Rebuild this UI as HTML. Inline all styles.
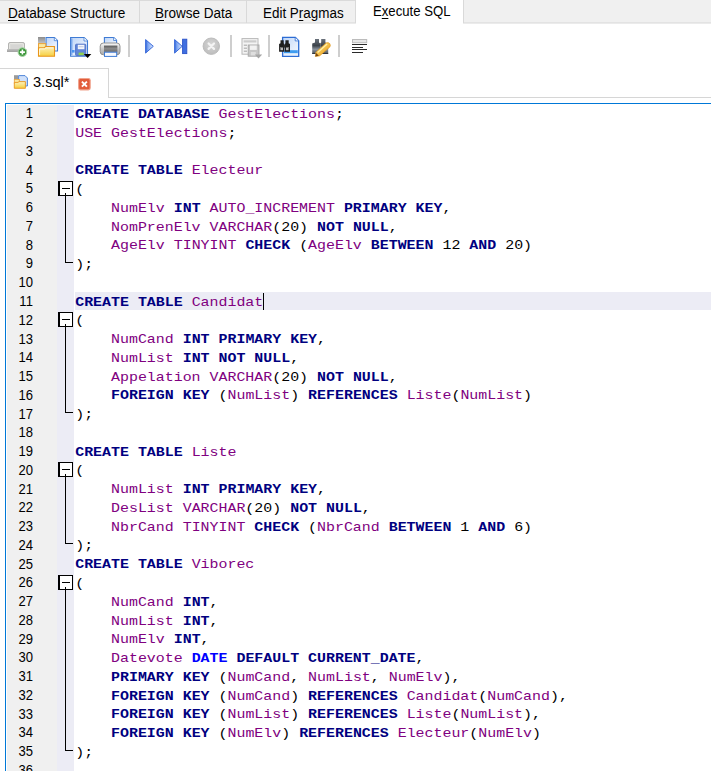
<!DOCTYPE html>
<html><head><meta charset="utf-8"><title>DB Browser for SQLite - Execute SQL</title>
<style>
html,body{margin:0;padding:0;}
body{width:711px;height:771px;overflow:hidden;background:#fff;position:relative;font-family:"Liberation Sans",sans-serif;color:#000;}
.abs{position:absolute;}
/* top tab bar */
#tabbar{position:absolute;left:0;top:0;width:711px;height:22px;background:#f0f0f0;border-bottom:1px solid #e3e3e3;box-shadow:0 1px 0 #ebebeb;}
#tabtop{position:absolute;left:0;top:0;width:356px;height:1px;background:#dadada;}
.tsep{position:absolute;top:0;width:1px;height:23px;background:#d9d9d9;}
#tabsel{position:absolute;left:356px;top:0;width:107px;height:25px;background:#fff;}
.tl{position:absolute;white-space:nowrap;font-size:15.2px;line-height:18px;transform-origin:0 0;}
.ftab span{position:absolute;white-space:nowrap;font-size:15.2px;line-height:18px;transform-origin:0 0;}
u{text-decoration:underline;text-underline-offset:2px;text-decoration-thickness:1px;}
/* file tab */
#pane{position:absolute;left:108px;top:97px;width:603px;height:1px;background:#d6d6d6;}
.ftab{position:absolute;left:0;top:68px;width:108px;height:29px;background:#fff;border-top:1px solid #d6d6d6;border-right:1px solid #d6d6d6;box-sizing:content-box;}
/* editor */
#edT{position:absolute;left:5px;top:103px;width:706px;height:1px;background:#0078d7;}
#edL{position:absolute;left:5px;top:103px;width:1px;height:668px;background:#0078d7;}
#lnm{position:absolute;left:7px;top:105px;width:50px;height:666px;background:#f0f0f0;}
#fm{position:absolute;left:57px;top:105px;width:17px;height:666px;background:#ececf5;}
#cur{position:absolute;left:75px;top:292.00px;width:637px;height:18px;background:#ececf5;}
#caret{position:absolute;left:263px;top:292.50px;width:1px;height:17px;background:#000;}
.ln{position:absolute;left:0;width:32.9px;text-align:right;font-size:13.8px;line-height:25px;height:25px;color:#000;transform:scaleX(0.945);transform-origin:100% 0;}
.cl{position:absolute;left:75.2px;white-space:pre;font-family:"Liberation Mono",monospace;font-size:14.931px;line-height:25px;height:25px;transform:scaleY(0.8);transform-origin:0 16.5px;color:#000;}
.k{color:#000080;font-weight:bold;}
.f{color:#0000ff;font-weight:bold;}
.i{color:#800080;}
.o{color:#000;}
.fb{position:absolute;left:58px;width:15px;height:15px;box-sizing:border-box;border:1px solid #000;border-left-width:2px;background:#fff;}
.fb i{position:absolute;left:2px;top:6px;width:8px;height:1px;background:#000;}
.fv{position:absolute;left:65px;width:1px;background:#000;}
.fh{position:absolute;left:65px;width:8px;height:1px;background:#000;}
.sep{position:absolute;top:35px;width:1.7px;height:22px;background:#cecece;}
svg{position:absolute;overflow:visible;}
</style></head><body>
<div id="tabbar"></div><div id="tabtop"></div><div id="tabsel"></div>
<div class="tsep" style="left:139px"></div><div class="tsep" style="left:246px"></div><div class="tsep" style="left:355px"></div><div class="tsep" style="left:463px"></div>
<span class="tl" style="left:8px;top:4px;transform:scaleX(0.897)"><u>D</u>atabase Structure</span>
<span class="tl" style="left:154.6px;top:4px;transform:scaleX(0.89)"><u>B</u>rowse Data</span>
<span class="tl" style="left:262.8px;top:4px;transform:scaleX(0.884)">Edit P<u>r</u>agmas</span>
<span class="tl" style="left:373px;top:2px;transform:scaleX(0.866)">E<u>x</u>ecute SQL</span>

<svg style="left:0;top:28px" width="400" height="40" viewBox="0 28 400 40">
<defs>
<linearGradient id="gDoc" x1="0" y1="0" x2="1" y2="1"><stop offset="0" stop-color="#bdd5f8"/><stop offset="0.6" stop-color="#e3edfc"/><stop offset="1" stop-color="#f6f9fe"/></linearGradient>
<linearGradient id="gFold" x1="0" y1="0" x2="0" y2="1"><stop offset="0" stop-color="#fdf3c0"/><stop offset="1" stop-color="#f6cf3f"/></linearGradient>
<linearGradient id="gGray" x1="0" y1="0" x2="0" y2="1"><stop offset="0" stop-color="#8c8c8c"/><stop offset="1" stop-color="#c4c4c4"/></linearGradient>
<linearGradient id="gPr" x1="0" y1="0" x2="0" y2="1"><stop offset="0" stop-color="#5a5a5a"/><stop offset="0.5" stop-color="#8c8c8c"/><stop offset="1" stop-color="#6a6a6a"/></linearGradient>
<linearGradient id="gPlay" x1="0" y1="0" x2="1" y2="0"><stop offset="0" stop-color="#2f62d6"/><stop offset="0.3" stop-color="#7aa4f2"/><stop offset="1" stop-color="#e2ecff"/></linearGradient>
<linearGradient id="gBin" x1="0" y1="0" x2="0" y2="1"><stop offset="0" stop-color="#6a727c"/><stop offset="0.45" stop-color="#3c424a"/><stop offset="0.7" stop-color="#8a929c"/><stop offset="1" stop-color="#4a5058"/></linearGradient>
<linearGradient id="gPen" x1="0" y1="0" x2="1" y2="1"><stop offset="0" stop-color="#fde27a"/><stop offset="1" stop-color="#e89a18"/></linearGradient>
<radialGradient id="gStop" cx="0.5" cy="0.4" r="0.6"><stop offset="0" stop-color="#d6d6d6"/><stop offset="1" stop-color="#bdbdbd"/></radialGradient>
<linearGradient id="gPrB" x1="0" y1="0" x2="0" y2="1"><stop offset="0" stop-color="#fafafa"/><stop offset="0.5" stop-color="#c8c8c8"/><stop offset="1" stop-color="#a8a8a8"/></linearGradient>
</defs>
<!-- 1: new tab -->
<path d="M8.5 49.5V44Q8.5 42.5 10 42.5H23Q24.5 42.5 24.5 44V49.5Z" fill="#d6d6d4" stroke="#b4b4b2" stroke-width="1"/>
<path d="M9.7 49V44.3Q9.7 43.7 10.4 43.7H22.6Q23.3 43.7 23.3 44.3V49" fill="none" stroke="#ecece8" stroke-width="0.9"/>
<rect x="7" y="49.4" width="19.5" height="2.6" fill="#a6a6a6"/>
<rect x="7" y="49.4" width="19.5" height="0.9" fill="#c4c4c4"/>
<circle cx="22.4" cy="52.1" r="4.3" fill="#3f983d" stroke="#a6d4a4" stroke-width="1"/>
<path d="M22.4 49.6V54.6M19.9 52.1H24.9" stroke="#fff" stroke-width="1.6"/>
<!-- 2: open -->
<rect x="38" y="37" width="7" height="6.5" fill="url(#gGray)"/>
<path d="M46 37.5H54.5L57.5 40.5V51H46Z" fill="url(#gDoc)" stroke="#3f7bd4" stroke-width="1.1"/>
<path d="M54.3 37.6V40.7H57.4" fill="#fff" stroke="#3f7bd4" stroke-width="0.8"/>
<rect x="38.5" y="43.6" width="7.3" height="5" fill="#fbe9a0" stroke="#e9a23a" stroke-width="1"/>
<path d="M38.5 56.2V47.8H44.2L45.6 46.6H54.5V56.2Z" fill="url(#gFold)" stroke="#e8951c" stroke-width="1.1"/>
<path d="M39.6 55V48.9H44.6L46 47.8H53.4" fill="none" stroke="#fffbe6" stroke-width="0.9"/>
<!-- 3: save -->
<path d="M70.6 37.5H84.2L87.5 40.8V56.2H70.6Z" fill="url(#gDoc)" stroke="#3f7bd4" stroke-width="1.1"/>
<path d="M71.8 38.6V55" stroke="#6ea0ea" stroke-width="1.2"/>
<path d="M84 37.6V41H87.4" fill="#fff" stroke="#3f7bd4" stroke-width="0.8"/>
<rect x="72" y="50" width="2.6" height="2.6" fill="#4a94f0"/>
<rect x="75.6" y="44.2" width="10.2" height="11.4" rx="0.8" fill="#6186d8" stroke="#4a6cc4" stroke-width="0.9"/>
<rect x="77.8" y="44.8" width="6.6" height="4.4" fill="#f4f6fb"/>
<rect x="78.6" y="46.4" width="5" height="0.8" fill="#b0bcd8"/>
<rect x="78.6" y="52.6" width="5.2" height="2.6" fill="#8fd14f"/>
<path d="M83.9 54H91.3L87.6 57.9Z" fill="#000"/>
<!-- 4: print -->
<path d="M104.4 37.5H113.8L116.6 40.3V47H104.4Z" fill="url(#gDoc)" stroke="#3f7bd4" stroke-width="1.1"/>
<path d="M113.6 37.6V40.5H116.5" fill="#fff" stroke="#3f7bd4" stroke-width="0.8"/>
<rect x="100.2" y="43" width="19.8" height="11.8" rx="3.2" fill="url(#gPrB)" stroke="#8a8a8a" stroke-width="0.9"/>
<rect x="104" y="45.6" width="13.4" height="6.2" fill="url(#gPr)"/>
<rect x="104.5" y="52.2" width="12.2" height="4.2" fill="#f6f9ff" stroke="#3f7bd4" stroke-width="1"/>
<!-- 5: play -->
<path d="M145.6 39.6L153.3 46.3L145.6 53.1Z" fill="url(#gPlay)" stroke="#3a6ada" stroke-width="1" stroke-linejoin="round"/>
<!-- 6: step -->
<path d="M174.6 39.6L182.2 46.3L174.6 53.1Z" fill="url(#gPlay)" stroke="#3a6ada" stroke-width="1" stroke-linejoin="round"/>
<rect x="182.6" y="39.2" width="4.2" height="14.4" fill="#3f6fe0" stroke="#2a52c8" stroke-width="0.9"/>
<!-- 7: stop (disabled) -->
<circle cx="211.3" cy="46.2" r="8.2" fill="url(#gStop)" stroke="#bcbcbc" stroke-width="1"/>
<path d="M208.6 43.5L214 48.9M214 43.5L208.6 48.9" stroke="#f4f4f4" stroke-width="2.2" stroke-linecap="round"/>
<!-- 8: save results (disabled) -->
<rect x="242" y="38.6" width="16" height="15.6" fill="#f4f4f4" stroke="#b8b8b8" stroke-width="1"/>
<rect x="243.6" y="40.3" width="12.8" height="2.2" fill="#cccccc"/>
<path d="M243.8 45.2H247M243.8 48.2H247M243.8 51.2H247" stroke="#bdbdbd" stroke-width="1.5"/>
<rect x="248.2" y="45" width="10.8" height="11.2" fill="#c6c6c6" stroke="#a8a8a8" stroke-width="0.9"/>
<rect x="250" y="45.5" width="6.8" height="4.4" fill="#f2f2f2"/>
<rect x="250.8" y="52" width="5" height="3.4" fill="#dedede"/>
<path d="M254.8 54.4H262.2L258.5 58.4Z" fill="#a6a6a6"/>
<!-- 9: find -->
<path d="M282.6 37.4H295.4L298.7 40.7V56.4H282.6Z" fill="url(#gDoc)" stroke="#2c6cd4" stroke-width="1.3"/>
<path d="M295.2 37.5V40.9H298.6" fill="#fff" stroke="#2c6cd4" stroke-width="0.8"/>
<rect x="284" y="50.2" width="13.8" height="3.2" fill="#3e9cf0"/>
<rect x="284" y="53.4" width="13.8" height="1.8" fill="#e6f0fd"/>
<path d="M280.5 40.3H283.7V43.2L284.2 44V51.7H279.1V44L280.5 43.2Z" fill="#1e1e1e"/>
<path d="M285.4 40.3H288.7V43.2L290 44V51.7H284.7V44L285.4 43.2Z" fill="#1e1e1e"/>
<rect x="283.4" y="44.6" width="2" height="3" fill="#2a2a2a"/>
<rect x="280.4" y="47" width="2.6" height="3.2" fill="#b8b8b8"/>
<rect x="286" y="47" width="2.6" height="3.2" fill="#b8b8b8"/>
<rect x="280.4" y="47" width="2.6" height="1" fill="#6e6e6e"/>
<rect x="286" y="47" width="2.6" height="1" fill="#6e6e6e"/>
<!-- 10: find & replace -->
<path d="M315 39H319V42.4L320 43.2V53.8H312.2V43.4L315 42.4Z" fill="url(#gBin)"/>
<path d="M321.2 39H325.4V42.4L328.2 43.4V53.8H320.2V43.2L321.2 42.4Z" fill="url(#gBin)"/>
<rect x="312.2" y="53" width="16" height="0.9" fill="#2a2e34"/>
<path d="M315.3 56.4L316 52.2L326 42.9Q328.4 41.9 329.9 43.8Q330.9 45.6 329.8 47.1L319.6 55.9Z" fill="url(#gPen)" stroke="#e0951c" stroke-width="0.6"/>
<path d="M315.3 56.4L316.1 52.9L318.9 55.7Z" fill="#7a4a14"/>
<path d="M317.6 52.6L327.2 43.9" stroke="#fff0a8" stroke-width="1.3" fill="none"/>
<!-- 11: indent -->
<rect x="352.5" y="39.5" width="14.2" height="3.2" fill="#e6e6e6" stroke="#bcbcbc" stroke-width="1"/>
<path d="M352 44.5H367M352 47.5H363M352 49.5H367M352 52.5H363" stroke="#2a2a2a" stroke-width="1"/>
</svg>
<div class="sep" style="left:128px"></div>
<div class="sep" style="left:230px"></div>
<div class="sep" style="left:268px"></div>
<div class="sep" style="left:338px"></div>


<div id="pane"></div>
<div class="ftab"><span style="left:33px;top:4px;transform:scaleX(0.96)">3.sql*</span></div>
<svg style="left:0;top:68px" width="110" height="30" viewBox="0 68 110 30">
<rect x="14" y="75.2" width="4" height="4" fill="#9a9a9a"/>
<path d="M18.6 75.6H25L27.4 78V86H18.6Z" fill="#cfe0fa" stroke="#3f7bd4" stroke-width="0.9"/>
<rect x="14.3" y="79.4" width="5" height="4" fill="#fbe9a0" stroke="#e9a23a" stroke-width="0.8"/>
<path d="M14.3 88.3V82.4H18L19 81.6H25.4V88.3Z" fill="url(#gFold)" stroke="#e8951c" stroke-width="0.9"/>
<rect x="78.6" y="78.5" width="11.6" height="11.4" rx="1.8" fill="#e25c3a" stroke="#f0a48e" stroke-width="1.1"/>
<path d="M81.9 81.7L86.9 86.7M86.9 81.7L81.9 86.7" stroke="#fff" stroke-width="1.9"/>
</svg>


<div id="lnm"></div><div id="fm"></div>
<div id="cur"></div>
<div id="edT"></div><div id="edL"></div>
<div class="fb" style="top:181px"><i></i></div>
<div class="fv" style="top:193px;height:70px"></div>
<div class="fh" style="top:262px"></div>
<div class="fb" style="top:312px"><i></i></div>
<div class="fv" style="top:324px;height:89px"></div>
<div class="fh" style="top:412px"></div>
<div class="fb" style="top:462px"><i></i></div>
<div class="fv" style="top:474px;height:70px"></div>
<div class="fh" style="top:543px"></div>
<div class="fb" style="top:575px"><i></i></div>
<div class="fv" style="top:587px;height:164px"></div>
<div class="fh" style="top:750px"></div>
<div class="ln" style="top:101.40px">1</div>
<div class="cl" style="top:102.00px"><span class="k">CREATE</span> <span class="k">DATABASE</span> <span class="i">GestElections</span><span class="o">;</span></div>
<div class="ln" style="top:120.16px">2</div>
<div class="cl" style="top:120.76px"><span class="i">USE</span> <span class="i">GestElections</span><span class="o">;</span></div>
<div class="ln" style="top:138.92px">3</div>
<div class="ln" style="top:157.68px">4</div>
<div class="cl" style="top:158.28px"><span class="k">CREATE</span> <span class="k">TABLE</span> <span class="i">Electeur</span></div>
<div class="ln" style="top:176.44px">5</div>
<div class="cl" style="top:177.04px"><span class="o">(</span></div>
<div class="ln" style="top:195.20px">6</div>
<div class="cl" style="top:195.80px">    <span class="i">NumElv</span> <span class="k">INT</span> <span class="i">AUTO_INCREMENT</span> <span class="k">PRIMARY</span> <span class="k">KEY</span><span class="o">,</span></div>
<div class="ln" style="top:213.96px">7</div>
<div class="cl" style="top:214.56px">    <span class="i">NomPrenElv</span> <span class="i">VARCHAR</span><span class="o">(</span><span class="o">20</span><span class="o">)</span> <span class="k">NOT</span> <span class="k">NULL</span><span class="o">,</span></div>
<div class="ln" style="top:232.72px">8</div>
<div class="cl" style="top:233.32px">    <span class="i">AgeElv</span> <span class="i">TINYINT</span> <span class="k">CHECK</span> <span class="o">(</span><span class="i">AgeElv</span> <span class="k">BETWEEN</span> <span class="o">12</span> <span class="k">AND</span> <span class="o">20</span><span class="o">)</span></div>
<div class="ln" style="top:251.48px">9</div>
<div class="cl" style="top:252.08px"><span class="o">)</span><span class="o">;</span></div>
<div class="ln" style="top:270.24px">10</div>
<div class="ln" style="top:289.00px">11</div>
<div class="cl" style="top:289.60px"><span class="k">CREATE</span> <span class="k">TABLE</span> <span class="i">Candidat</span></div>
<div class="ln" style="top:307.76px">12</div>
<div class="cl" style="top:308.36px"><span class="o">(</span></div>
<div class="ln" style="top:326.52px">13</div>
<div class="cl" style="top:327.12px">    <span class="i">NumCand</span> <span class="k">INT</span> <span class="k">PRIMARY</span> <span class="k">KEY</span><span class="o">,</span></div>
<div class="ln" style="top:345.28px">14</div>
<div class="cl" style="top:345.88px">    <span class="i">NumList</span> <span class="k">INT</span> <span class="k">NOT</span> <span class="k">NULL</span><span class="o">,</span></div>
<div class="ln" style="top:364.04px">15</div>
<div class="cl" style="top:364.64px">    <span class="i">Appelation</span> <span class="i">VARCHAR</span><span class="o">(</span><span class="o">20</span><span class="o">)</span> <span class="k">NOT</span> <span class="k">NULL</span><span class="o">,</span></div>
<div class="ln" style="top:382.80px">16</div>
<div class="cl" style="top:383.40px">    <span class="k">FOREIGN</span> <span class="k">KEY</span> <span class="o">(</span><span class="i">NumList</span><span class="o">)</span> <span class="k">REFERENCES</span> <span class="i">Liste</span><span class="o">(</span><span class="i">NumList</span><span class="o">)</span></div>
<div class="ln" style="top:401.56px">17</div>
<div class="cl" style="top:402.16px"><span class="o">)</span><span class="o">;</span></div>
<div class="ln" style="top:420.32px">18</div>
<div class="ln" style="top:439.08px">19</div>
<div class="cl" style="top:439.68px"><span class="k">CREATE</span> <span class="k">TABLE</span> <span class="i">Liste</span></div>
<div class="ln" style="top:457.84px">20</div>
<div class="cl" style="top:458.44px"><span class="o">(</span></div>
<div class="ln" style="top:476.60px">21</div>
<div class="cl" style="top:477.20px">    <span class="i">NumList</span> <span class="k">INT</span> <span class="k">PRIMARY</span> <span class="k">KEY</span><span class="o">,</span></div>
<div class="ln" style="top:495.36px">22</div>
<div class="cl" style="top:495.96px">    <span class="i">DesList</span> <span class="i">VARCHAR</span><span class="o">(</span><span class="o">20</span><span class="o">)</span> <span class="k">NOT</span> <span class="k">NULL</span><span class="o">,</span></div>
<div class="ln" style="top:514.12px">23</div>
<div class="cl" style="top:514.72px">    <span class="i">NbrCand</span> <span class="i">TINYINT</span> <span class="k">CHECK</span> <span class="o">(</span><span class="i">NbrCand</span> <span class="k">BETWEEN</span> <span class="o">1</span> <span class="k">AND</span> <span class="o">6</span><span class="o">)</span></div>
<div class="ln" style="top:532.88px">24</div>
<div class="cl" style="top:533.48px"><span class="o">)</span><span class="o">;</span></div>
<div class="ln" style="top:551.64px">25</div>
<div class="cl" style="top:552.24px"><span class="k">CREATE</span> <span class="k">TABLE</span> <span class="i">Viborec</span></div>
<div class="ln" style="top:570.40px">26</div>
<div class="cl" style="top:571.00px"><span class="o">(</span></div>
<div class="ln" style="top:589.16px">27</div>
<div class="cl" style="top:589.76px">    <span class="i">NumCand</span> <span class="k">INT</span><span class="o">,</span></div>
<div class="ln" style="top:607.92px">28</div>
<div class="cl" style="top:608.52px">    <span class="i">NumList</span> <span class="k">INT</span><span class="o">,</span></div>
<div class="ln" style="top:626.68px">29</div>
<div class="cl" style="top:627.28px">    <span class="i">NumElv</span> <span class="k">INT</span><span class="o">,</span></div>
<div class="ln" style="top:645.44px">30</div>
<div class="cl" style="top:646.04px">    <span class="i">Datevote</span> <span class="f">DATE</span> <span class="k">DEFAULT</span> <span class="k">CURRENT_DATE</span><span class="o">,</span></div>
<div class="ln" style="top:664.20px">31</div>
<div class="cl" style="top:664.80px">    <span class="k">PRIMARY</span> <span class="k">KEY</span> <span class="o">(</span><span class="i">NumCand</span><span class="o">,</span> <span class="i">NumList</span><span class="o">,</span> <span class="i">NumElv</span><span class="o">)</span><span class="o">,</span></div>
<div class="ln" style="top:682.96px">32</div>
<div class="cl" style="top:683.56px">    <span class="k">FOREIGN</span> <span class="k">KEY</span> <span class="o">(</span><span class="i">NumCand</span><span class="o">)</span> <span class="k">REFERENCES</span> <span class="i">Candidat</span><span class="o">(</span><span class="i">NumCand</span><span class="o">)</span><span class="o">,</span></div>
<div class="ln" style="top:701.72px">33</div>
<div class="cl" style="top:702.32px">    <span class="k">FOREIGN</span> <span class="k">KEY</span> <span class="o">(</span><span class="i">NumList</span><span class="o">)</span> <span class="k">REFERENCES</span> <span class="i">Liste</span><span class="o">(</span><span class="i">NumList</span><span class="o">)</span><span class="o">,</span></div>
<div class="ln" style="top:720.48px">34</div>
<div class="cl" style="top:721.08px">    <span class="k">FOREIGN</span> <span class="k">KEY</span> <span class="o">(</span><span class="i">NumElv</span><span class="o">)</span> <span class="k">REFERENCES</span> <span class="i">Electeur</span><span class="o">(</span><span class="i">NumElv</span><span class="o">)</span></div>
<div class="ln" style="top:739.24px">35</div>
<div class="cl" style="top:739.84px"><span class="o">)</span><span class="o">;</span></div>
<div class="ln" style="top:758.00px">36</div>
<div id="caret"></div>
</body></html>
